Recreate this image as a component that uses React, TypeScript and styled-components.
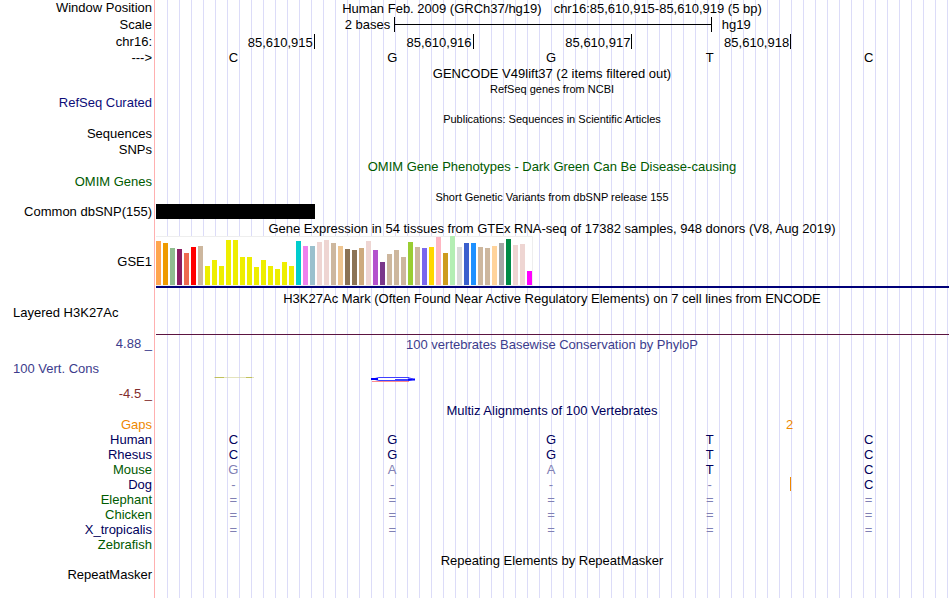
import React from "react";
import styled, { createGlobalStyle } from "styled-components";

const GlobalStyle = createGlobalStyle`
  body {
    margin: 0;
    background: #fff;
    color: #000;
    font-family: "Liberation Sans", Arial, Helvetica, sans-serif;
    font-size: 13px;
  }
`;

const navy = "#00005c";
const green = "#005a00";
const orange = "#ee8800";
const muted = "#8080b4";
const consBlue = "#3c3c8c";

const Browser = styled.main`
  min-height: 100vh;
  overflow: hidden;
  background:
    linear-gradient(#ffb0b0, #ffb0b0) 154px 0 / 1px 100% no-repeat,
    repeating-linear-gradient(90deg, transparent 0 11px, #dcdcf8 11px 12px) 156px 0 / calc(100% - 156px) 100% no-repeat;
`;

const Row = styled.div<{ $h: number }>`
  display: grid;
  grid-template-columns: 154px minmax(0, 1fr);
  column-gap: 2px;
  height: ${(p) => p.$h}px;
  line-height: ${(p) => p.$h}px;
`;

const Label = styled.div<{ $color?: string; $left?: boolean }>`
  padding: 0 2px 0 13px;
  text-align: ${(p) => (p.$left ? "left" : "right")};
  color: ${(p) => p.$color || "#000"};
  white-space: nowrap;
`;

const Title = styled.div<{ $color?: string; $small?: boolean }>`
  display: flex;
  justify-content: center;
  gap: 12px;
  grid-column: 2;
  padding: 1px 2px 0 0;
  font-size: ${(p) => (p.$small ? 11 : 13)}px;
  color: ${(p) => p.$color || "#000"};
  white-space: nowrap;
`;

const Scale = styled.div`
  display: grid;
  grid-template-columns: 3fr 4fr 3fr;
  align-items: center;
`;

const ScaleText = styled.span<{ $end?: boolean }>`
  padding: 0 ${(p) => (p.$end ? 4 : 10)}px;
  text-align: ${(p) => (p.$end ? "right" : "left")};
`;

const ScaleBar = styled.div`
  display: flex;
  align-items: center;
  height: 15px;
  border: solid #000;
  border-width: 0 1px;

  &::before {
    content: "";
    flex: 1;
    height: 1px;
    background: #000;
  }
`;

const Bases = styled.div`
  display: grid;
  grid-template-columns: repeat(5, minmax(0, 1fr));
`;

const Tick = styled.span`
  height: 15px;
  margin-top: 1px;
  line-height: 17px;
  padding-right: 1px;
  text-align: right;
  border-right: 1px solid #000;
`;

const Base = styled.span<{ $color?: string; $gap?: boolean }>`
  padding-right: ${(p) => (p.$gap ? 3 : 4)}px;
  border-right: ${(p) => (p.$gap ? `1px solid ${orange}` : "0")};
  height: ${(p) => (p.$gap ? "14px" : "auto")};
  text-align: center;
  color: ${(p) => p.$color || "#000"};
`;

const Gaps = styled.div`
  display: grid;
  grid-template-columns: 7fr 2fr 1fr;
  color: ${orange};
`;

const GapCount = styled.span`
  grid-column: 2;
  padding-right: 3px;
  text-align: center;
`;

const Variant = styled.div`
  width: 20%;
  height: 100%;
  background: #000;
`;

const Expression = styled.div`
  margin-right: 1px;
  border-bottom: 2px solid #000078;
`;

const Chart = styled.div`
  display: flex;
  align-items: flex-end;
  gap: 2px;
  box-sizing: border-box;
  width: max-content;
  height: 50px;
  border: solid #eeeeee;
  border-width: 0 1px 1px 0;
  background: linear-gradient(#eeeeee, #eeeeee) 0 0 / 100% 1px no-repeat #fff;
`;

const Bar = styled.span<{ $h: number; $color: string }>`
  width: 5px;
  height: ${(p) => p.$h}px;
  background: ${(p) => p.$color};
`;

const Signal = styled.div`
  margin-right: 1px;
  border-bottom: 1px solid #5c1440;
`;

const Wiggle = styled.span`
  display: flex;
  justify-content: center;
  align-items: flex-start;
  padding-right: 3px;
`;

const Spacer = styled.div<{ $h: number }>`
  height: ${(p) => p.$h}px;
`;

const yellow = "#eeee00";
const tan = "#cdb79e";
const rose = "#eed5d2";

const tissues: [number, string][] = [
  [44, "#ffa54f"], [42, "#ee9a00"], [37, "#8fbc8f"], [36, "#8b1c62"], [32, "#ee6a50"],
  [38, "#ff0000"], [39, tan], [19, yellow], [25, yellow], [19, yellow], [45, yellow],
  [45, yellow], [28, yellow], [28, yellow], [18, yellow], [25, yellow], [19, yellow],
  [16, yellow], [23, yellow], [19, yellow], [44, "#00cdcd"], [39, "#ee82ee"],
  [39, "#9ac0cd"], [43, rose], [45, rose], [42, tan], [39, "#eec591"], [36, "#8b7355"],
  [35, "#8b7355"], [37, "#cdaa7d"], [44, rose], [35, "#b452cd"], [23, "#7a378b"],
  [31, tan], [35, tan], [28, tan], [43, "#9acd32"], [38, tan], [37, "#7a67ee"],
  [38, "#ffd700"], [48, "#ffb6c1"], [32, "#cd9b1d"], [49, "#b4eeb4"], [38, "#d9d9d9"],
  [42, "#3a5fcd"], [42, "#1e90ff"], [38, tan], [37, tan], [39, "#ffd39b"],
  [42, "#a6a6a6"], [46, "#008b45"], [40, rose], [41, rose], [14, "#ff00ff"],
];

const species: { name: string; color: string; bases: string; gapAfter?: number }[] = [
  { name: "Human", color: navy, bases: "CGGTC" },
  { name: "Rhesus", color: navy, bases: "CGGTC" },
  { name: "Mouse", color: green, bases: "GAATC" },
  { name: "Dog", color: navy, bases: "----C", gapAfter: 3 },
  { name: "Elephant", color: green, bases: "=====" },
  { name: "Chicken", color: green, bases: "=====" },
  { name: "X_tropicalis", color: navy, bases: "=====" },
  { name: "Zebrafish", color: green, bases: "" },
];

const human = "CGGTC";

export default function App() {
  return (
    <>
      <GlobalStyle />
      <Browser>
        <Row $h={16}>
          <Label>Window Position</Label>
          <Title>
            <span>Human Feb. 2009 (GRCh37/hg19)</span>
            <span>chr16:85,610,915-85,610,919 (5 bp)</span>
          </Title>
        </Row>
        <Row $h={17}>
          <Label>Scale</Label>
          <Scale>
            <ScaleText $end>2 bases</ScaleText>
            <ScaleBar />
            <ScaleText>hg19</ScaleText>
          </Scale>
        </Row>
        <Row $h={17}>
          <Label>chr16:</Label>
          <Bases>
            {["85,610,915", "85,610,916", "85,610,917", "85,610,918"].map((t) => (
              <Tick key={t}>{t}</Tick>
            ))}
          </Bases>
        </Row>
        <Row $h={15}>
          <Label>---&gt;</Label>
          <Bases>
            {human.split("").map((b, i) => (
              <Base key={i}>{b}</Base>
            ))}
          </Bases>
        </Row>

        <Row $h={16}>
          <Title>GENCODE V49lift37 (2 items filtered out)</Title>
        </Row>
        <Row $h={14}>
          <Title $small>RefSeq genes from NCBI</Title>
        </Row>
        <Row $h={15}>
          <Label $color="#0c0c78">RefSeq Curated</Label>
        </Row>

        <Row $h={16}>
          <Title $small>Publications: Sequences in Scientific Articles</Title>
        </Row>
        <Row $h={15}>
          <Label>Sequences</Label>
        </Row>
        <Row $h={17}>
          <Label>SNPs</Label>
        </Row>

        <Row $h={16}>
          <Title $color={green}>OMIM Gene Phenotypes - Dark Green Can Be Disease-causing</Title>
        </Row>
        <Row $h={15}>
          <Label $color={green}>OMIM Genes</Label>
        </Row>

        <Row $h={15}>
          <Title $small>Short Genetic Variants from dbSNP release 155</Title>
        </Row>
        <Row $h={15}>
          <Label>Common dbSNP(155)</Label>
          <Variant />
        </Row>

        <Row $h={17}>
          <Title>Gene Expression in 54 tissues from GTEx RNA-seq of 17382 samples, 948 donors (V8, Aug 2019)</Title>
        </Row>
        <Row $h={52}>
          <Label>GSE1</Label>
          <Expression>
            <Chart>
              {tissues.map(([h, color], i) => (
                <Bar key={i} $h={h} $color={color} />
              ))}
            </Chart>
          </Expression>
        </Row>

        <Spacer $h={2} />
        <Row $h={15}>
          <Title>H3K27Ac Mark (Often Found Near Active Regulatory Elements) on 7 cell lines from ENCODE</Title>
        </Row>
        <Row $h={15}>
          <Label $left>Layered H3K27Ac</Label>
        </Row>
        <Row $h={15}>
          <Label />
          <Signal />
        </Row>

        <Spacer $h={1} />
        <Row $h={16}>
          <Label $color={consBlue}>4.88 _</Label>
          <Title $color={consBlue}>100 vertebrates Basewise Conservation by PhyloP</Title>
        </Row>
        <Spacer $h={10} />
        <Row $h={14}>
          <Label $color={consBlue} $left>100 Vert. Cons</Label>
        </Row>
        <Row $h={10}>
          <Label />
          <Bases>
            <Wiggle>
              <svg width="40" height="7" aria-hidden="true">
                <path d="M0 1.5H40" stroke="#d8d8a0" opacity=".7" />
                <path d="M1 1.5H10M32 1.5H38" stroke="#b4b432" opacity=".7" />
              </svg>
            </Wiggle>
            <Wiggle>
              <svg width="44" height="7" aria-hidden="true">
                <path d="M1 5.5H38" stroke="#ff7070" opacity=".8" />
                <path d="M38 1.5H8L2 3L8 4.5H38L42 3.5H24" fill="#fff" stroke="#4040ff" />
                <path d="M0 3H7M37 3.5H44" stroke="#0000ff" strokeWidth="2" />
                <path d="M37 1.5L42 3" stroke="#4040ff" />
              </svg>
            </Wiggle>
          </Bases>
        </Row>
        <Row $h={16}>
          <Label $color="#822d2d">-4.5 _</Label>
        </Row>

        <Row $h={16}>
          <Title $color={navy}>Multiz Alignments of 100 Vertebrates</Title>
        </Row>
        <Row $h={14}>
          <Label $color={orange}>Gaps</Label>
          <Gaps>
            <GapCount>2</GapCount>
          </Gaps>
        </Row>
        {species.map((s) => (
          <Row key={s.name} $h={15}>
            <Label $color={s.color}>{s.name}</Label>
            <Bases>
              {s.bases.split("").map((b, i) => (
                <Base key={i} $color={b === human[i] ? navy : muted} $gap={s.gapAfter === i}>
                  {b}
                </Base>
              ))}
            </Bases>
          </Row>
        ))}

        <Row $h={15}>
          <Title>Repeating Elements by RepeatMasker</Title>
        </Row>
        <Row $h={15}>
          <Label>RepeatMasker</Label>
        </Row>
      </Browser>
    </>
  );
}
